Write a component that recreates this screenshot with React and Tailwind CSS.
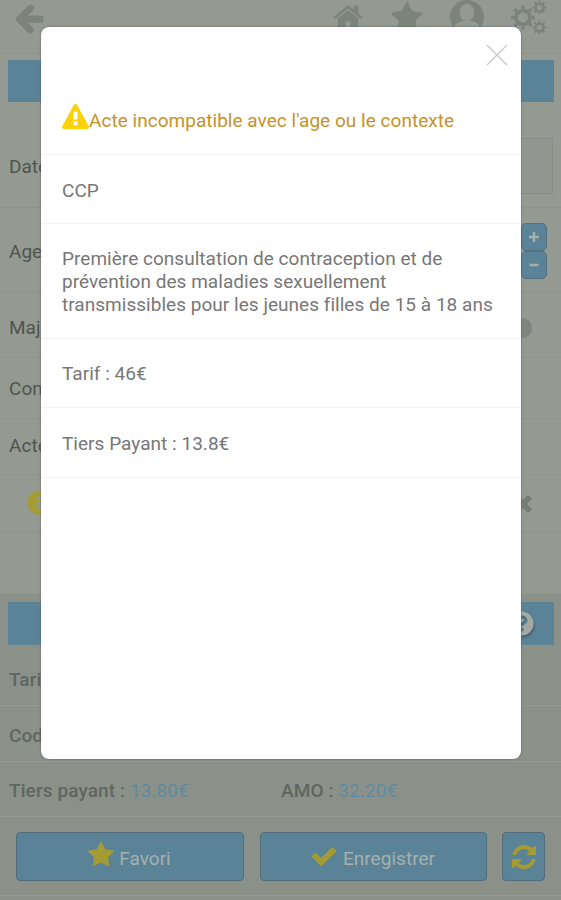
import React, { useState } from 'react';
import { FaInfoCircle, FaQuestionCircle } from 'react-icons/fa';

const ICONS = {
  back: 'M1664 896v128q0 53-32.5 90.5t-84.5 37.5h-704l293 294q38 36 38 90t-38 90l-75 76q-37 37-90 37-52 0-91-37l-651-652q-37-37-37-90 0-52 37-91l651-650q38-38 91-38 52 0 90 38l75 74q38 38 38 91t-38 91l-293 293h704q52 0 84.5 37.5t32.5 90.5z',
  home: 'M1472 992v480q0 26-19 45t-45 19h-384v-384h-256v384h-384q-26 0-45-19t-19-45v-480q0-1 .5-3t.5-3l575-474 575 474q1 2 1 6zm223-69l-62 74q-8 9-21 11h-3q-13 0-21-7l-692-577-692 577q-12 8-24 7-13-2-21-11l-62-74q-8-10-7-23.5t11-21.5l719-599q32-26 76-26t76 26l244 204v-195q0-14 9-23t23-9h192q14 0 23 9t9 23v408l219 182q10 8 11 21.5t-7 23.5z',
  star: 'M1728 647q0 22-26 48l-363 354 86 500q1 7 1 20 0 21-10.5 35.5t-30.5 14.5q-19 0-40-12l-449-236-449 236q-22 12-40 12-21 0-31.5-14.5t-10.5-35.5q0-6 2-20l86-500-364-354q-25-27-25-48 0-37 56-46l502-73 225-455q19-41 49-41t49 41l225 455 502 73q56 9 56 46z',
  check: 'M1671 566q0 40-28 68l-724 724-136 136q-28 28-68 28t-68-28l-136-136-362-362q-28-28-28-68t28-68l136-136q28-28 68-28t68 28l294 295 656-657q28-28 68-28t68 28l136 136q28 28 28 68z',
  times: 'M1490 1322q0 40-28 68l-136 136q-28 28-68 28t-68-28l-294-294-294 294q-28 28-68 28t-68-28l-136-136q-28-28-28-68t28-68l294-294-294-294q-28-28-28-68t28-68l136-136q28-28 68-28t68 28l294 294 294-294q28-28 68-28t68 28l136 136q28 28 28 68t-28 68l-294 294 294 294q28 28 28 68z',
  warning: 'M1024 1375v-190q0-14-9.5-23.5t-22.5-9.5h-192q-13 0-22.5 9.5t-9.5 23.5v190q0 14 9.5 23.5t22.5 9.5h192q13 0 22.5-9.5t9.5-23.5zm-2-374l18-459q0-12-10-19-13-11-24-11h-220q-11 0-24 11-10 7-10 21l17 457q0 10 10 16.5t24 6.5h185q14 0 23.5-6.5t10.5-16.5zm-14-934l768 1408q35 63-2 126-17 29-46.5 46t-63.5 17h-1536q-34 0-63.5-17t-46.5-46q-37-63-2-126l768-1408q17-31 47-49t65-18 65 18 47 49z',
  refresh: 'M1639 1056q0 5-1 7-64 268-268 434.5t-478 166.5q-146 0-282.5-55t-243.5-157l-129 129q-19 19-45 19t-45-19-19-45v-448q0-26 19-45t45-19h448q26 0 45 19t19 45-19 45l-137 137q71 66 161 102t187 36q134 0 250-65t186-179q11-17 53-117 8-23 30-23h192q13 0 22.5 9.5t9.5 22.5zm25-800v448q0 26-19 45t-45 19h-448q-26 0-45-19t-19-45 19-45l138-138q-148-137-349-137-134 0-250 65t-186 179q-11 17-53 117-8 23-30 23h-199q-13 0-22.5-9.5t-9.5-22.5v-7q65-268 270-434.5t480-166.5q146 0 284 55.5t245 156.5l130-129q19-19 45-19t45 19 19 45z',
};

const Icon = ({ name, className }) => (
  <svg viewBox="0 0 1792 1792" fill="currentColor" className={className}>
    <path d={ICONS[name]} />
  </svg>
);

const UserIcon = ({ className }) => (
  <svg viewBox="0 0 34 34" className={className}>
    <circle cx="17" cy="17" r="17" fill="#7b837b" />
    <path d="M4.5 27c.5-3 3-5 8.5-6h8c5.5 1 8 3 8.5 6a16 16 0 0 1-25 0z" fill="#949a92" />
    <ellipse cx="17" cy="12.5" rx="7.3" ry="8.7" fill="#949a92" />
  </svg>
);

// pathLength 16 gives eight evenly spaced teeth around each ring
const Gear = ({ cx, cy, r, width, tooth }) => (
  <g fill="none" stroke="currentColor">
    <circle cx={cx} cy={cy} r={r} strokeWidth={width} />
    <circle cx={cx} cy={cy} r={r + width / 2 + tooth / 2 - 0.3} strokeWidth={tooth} pathLength="16" strokeDasharray="0.9 1.1" strokeDashoffset="0.45" />
  </g>
);

const GearsIcon = ({ className }) => (
  <svg viewBox="0 0 36 34" className={className}>
    <Gear cx={12} cy={17.5} r={7} width={4} tooth={3.2} />
    <Gear cx={28.5} cy={7.5} r={4} width={2.4} tooth={2} />
    <Gear cx={28.5} cy={27.5} r={4} width={2.4} tooth={2} />
  </svg>
);

const Header = () => (
  <div className="flex h-[54px] items-start justify-between border-b border-[#8e948c] pr-[14px] pl-3 text-[#7b837b]">
    <Icon name="back" className="mt-px h-[34px] w-[34px]" />
    <div className="flex">
      <Icon name="home" className="mt-px mr-[26px] h-[32px] w-[32px]" />
      <Icon name="star" className="mt-px mr-[26px] h-[34px] w-[34px]" />
      <UserIcon className="mr-[27px] h-[34px] w-[34px]" />
      <GearsIcon className="h-[34px] w-[36px]" />
    </div>
  </div>
);

const Row = ({ label, className, labelClass, children }) => (
  <div className={`flex items-center justify-between border-b border-[#8e948c] pl-[9px] text-[#4f544f] ${className}`}>
    <span className={labelClass}>{label}</span>
    {children}
  </div>
);

// Main form, dimmed behind the dialog
const Form = () => (
  <div>
    <div className="mr-[7px] ml-2 mt-[6px] h-[42px] bg-[#5b8397]" />
    <Row label="Date" className="mt-[23px] h-[83px] pr-[8px]" labelClass="pt-[2px]">
      <div className="mb-px h-[56px] w-[280px] border border-[#888c86] bg-[#929690]" />
    </Row>
    <Row label="Age" className="h-[85px] pr-[14px]" labelClass="pt-1">
      <div className="flex flex-col pt-px">
        <button className="flex h-[28px] w-[26px] items-center justify-center rounded-[5px] border border-[#54707e] bg-[#5b8397]">
          <svg viewBox="0 0 10 10" className="h-[10px] w-[10px]" stroke="#a5aea9" strokeWidth="2.5"><path d="M5 0V10M0 5H10" /></svg>
        </button>
        <button className="flex h-[28px] w-[26px] items-center justify-center rounded-[5px] border border-[#54707e] bg-[#5b8397]">
          <svg viewBox="0 0 10 10" className="h-[10px] w-[10px]" stroke="#a5aea9" strokeWidth="2.5"><path d="M0.5 5H9.5" /></svg>
        </button>
      </div>
    </Row>
    <Row label="Maj" className="h-[65px] pt-[5px] pr-[29px]" labelClass="pt-px">
      <div className="h-5 w-5 rounded-full bg-[#7f847e]" />
    </Row>
    <Row label="Com" className="h-[61px]" labelClass="pt-[2px]" />
    <Row label="Acte" className="h-[56px] pb-px" />
    <div className="flex h-[58px] items-center justify-between border-b border-[#8e948c] pr-[25px] pb-[2px] pl-[27px]">
      <FaInfoCircle className="h-[25px] w-[25px] text-[#a59b35]" />
      <Icon name="times" className="h-[26px] w-[26px] text-[#747c75]" />
    </div>
    <div className="h-[61px]" />
  </div>
);

const Totals = () => (
  <div className="h-[306px] border-t border-[#8a8f88] bg-[#8b9189] font-medium text-[#5f6660]">
    <div className="mr-[7px] ml-2 mt-[7px] flex h-[43px] items-center justify-end bg-[#5b8397] pr-[20px]">
      <FaQuestionCircle className="h-[25px] w-[25px] text-[#a3aaa3] drop-shadow-[1px_2px_1px_#47616f]" />
    </div>
    <div className="flex h-[61px] items-center border-b border-[#949a92] pt-[11px] pl-[9px]">Tarif :</div>
    <div className="flex h-[56px] items-center border-b border-[#949a92] pt-[5px] pl-[9px]">Code :</div>
    <div className="flex h-[55px] items-center border-b border-[#949a92] pt-[4px] pl-[9px] tracking-[0.1px]">
      <div className="w-[272px]">Tiers payant : <span className="font-normal text-[#5d8ba3]">13.80€</span></div>
      <div>AMO : <span className="font-normal text-[#5d8ba3]">32.20€</span></div>
    </div>
    <div className="flex h-[79px] gap-4 border-b border-[#949a92] pt-[15px] pl-4 font-normal text-[#a6b0ad]">
      <button className="flex h-[49px] w-[228px] items-center justify-center rounded border border-[#506d7b] bg-[#5b8397] pr-[2px]">
        <Icon name="star" className="mr-[4px] mb-[4px] h-[28px] w-[28px] text-[#a59b35]" />
        <span className="pt-[6px]">Favori</span>
      </button>
      <button className="flex h-[49px] w-[227px] items-center justify-center rounded border border-[#506d7b] bg-[#5b8397] pr-[2px]">
        <Icon name="check" className="mr-[5px] mb-[2px] h-[28px] w-[28px] text-[#a59b35]" />
        <span className="pt-[6px]">Enregistrer</span>
      </button>
      <button className="-ml-px flex h-[49px] w-[43px] items-center justify-center rounded border border-[#506d7b] bg-[#5b8397]">
        <Icon name="refresh" className="h-[28px] w-[28px] text-[#a59b35]" />
      </button>
    </div>
  </div>
);

const Dialog = ({ onClose }) => (
  <div className="absolute top-[27px] left-[41px] h-[732px] w-[479.5px] rounded-[8px] bg-white text-[#777] shadow-[0_0_2px_#555]">
    <div className="flex h-[58px] items-start justify-end pt-[17px] pr-[13px]">
      <button onClick={onClose}>
        <svg viewBox="0 0 22 22" className="h-[22px] w-[22px]" stroke="#c8c8c8" strokeWidth="1.4">
          <path d="M1 1L21 21M21 1L1 21" />
        </svg>
      </button>
    </div>
    <div className="flex h-[70px] items-center border-b border-[#f3f3f3] pl-[21px] text-[#c79226]">
      <Icon name="warning" className="mb-[5px] h-[27px] w-[27px] text-[#fdd20b]" />
      <span className="pt-[3px] whitespace-nowrap">Acte incompatible avec l'age ou le contexte</span>
    </div>
    <div className="flex h-[69px] items-center border-b border-[#f3f3f3] pt-1 pl-[21px]">CCP</div>
    <div className="flex h-[115px] items-center border-b border-[#f3f3f3] pt-[3px] pl-[21px]">
      <p className="whitespace-nowrap">
        Première consultation de contraception et de<br />
        prévention des maladies sexuellement<br />
        transmissibles pour les jeunes filles de 15 à 18 ans
      </p>
    </div>
    <div className="flex h-[69px] items-center border-b border-[#f3f3f3] pt-[3px] pl-[21px]">Tarif : 46€</div>
    <div className="flex h-[70px] items-center border-b border-[#f3f3f3] pt-[3px] pl-[21px]">Tiers Payant : 13.8€</div>
  </div>
);

const App = () => {
  const [open, setOpen] = useState(true);

  return (
    <div className="relative h-[900px] w-[561px] overflow-hidden bg-[#949a92] font-[Roboto,sans-serif] text-[19px] leading-[22.7px] tracking-[0.03px]">
      <Header />
      <Form />
      <Totals />
      {open && <Dialog onClose={() => setOpen(false)} />}
    </div>
  );
};

export default App;
